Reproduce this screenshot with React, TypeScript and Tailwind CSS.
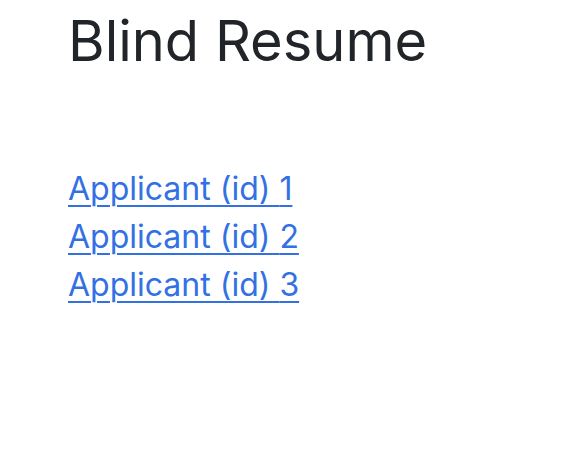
import React from 'react';

const applicants = [1, 2, 3];

function App() {
  return (
    <div className="min-h-screen bg-white pl-[68px] pt-[8px] font-['Inter',sans-serif]">
      <h1 className="text-[56px] leading-[1.2] text-[#212529]">Blind Resume</h1>
      <ul className="mt-[90px] flex flex-col">
        {applicants.map((id) => (
          <li key={id}>
            <a
              href="#"
              className="text-[32px] leading-[48px] text-[#3371e3] underline decoration-2 underline-offset-[5px]"
            >
              Applicant (id) {id}
            </a>
          </li>
        ))}
      </ul>
    </div>
  );
}

export default App;
